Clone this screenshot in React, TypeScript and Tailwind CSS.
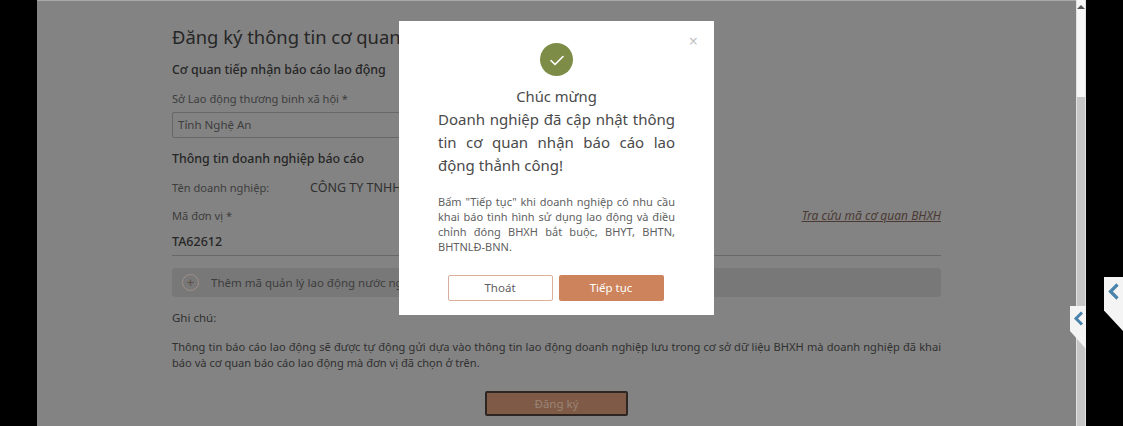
export default function App() {
  return (
    <div className="relative flex h-[426px] w-[1123px] overflow-hidden bg-black font-['Noto_Sans',sans-serif] text-[#303030]">
      <div className="w-[37px] shrink-0 bg-black" />
      <main className="h-full w-[1039px] shrink-0 overflow-hidden border-t border-[#a8a8a8] bg-[#838383] pl-[135px] pr-[135px]">
        <h1 className="mt-[22px] h-[28px] whitespace-nowrap text-[18.4px] leading-[28px] text-[#262626]">Đăng ký thông tin cơ quan nhận báo cáo lao động</h1>
        <h2 className="mt-[9px] h-[20px] text-[12.4px] font-medium leading-[20px] text-[#262626]">Cơ quan tiếp nhận báo cáo lao động</h2>
        <label className="mt-[9px] block h-[20px] text-[11.1px] leading-[20px] text-[#3d3d3d]">Sở Lao động thương binh xã hội *</label>
        <div className="mt-[3px] flex h-[26px] w-[300px] items-center rounded-[2px] border border-[#686868] pl-[5px] text-[11.5px] text-[#3d3d3d]">Tỉnh Nghệ An</div>
        <h2 className="mt-[11px] h-[20px] text-[12.4px] font-medium leading-[20px] text-[#262626]">Thông tin doanh nghiệp báo cáo</h2>
        <div className="mt-[9px] flex h-[20px] items-center text-[11.1px] text-[#3d3d3d]">
          <span className="w-[138px]">Tên doanh nghiệp:</span>
          <span className="text-[12.5px] text-[#303030]">CÔNG TY TNHH</span>
        </div>
        <div className="mt-[8px] flex h-[20px] items-center justify-between text-[11.1px] text-[#3d3d3d]">
          <span>Mã đơn vị *</span>
          <a className="text-[12px] italic text-[#4b3a33] underline">Tra cứu mã cơ quan BHXH</a>
        </div>
        <div className="mt-[6px] flex h-[24px] items-center border-b border-[#686868] pb-[2px] text-[12.5px] font-medium text-[#262626]">TA62612</div>
        <div className="mt-[12px] flex h-[29px] items-center rounded-[4px] bg-[#787878] pl-[10px] text-[11.5px] text-[#3d3d3d]">
          <span className="flex h-[17px] w-[17px] items-center justify-center rounded-full border border-[#a08f88] text-[13px] leading-none text-[#5f4e47]">+</span>
          <span className="ml-[12px]">Thêm mã quản lý lao động nước ngoài</span>
        </div>
        <p className="mt-[12px] h-[18px] text-[11.5px] leading-[18px] text-[#303030]">Ghi chú:</p>
        <p className="mt-[12px] text-justify text-[11.1px] leading-[16px] text-[#303030]">Thông tin báo cáo lao động sẽ được tự động gửi dựa vào thông tin lao động doanh nghiệp lưu trong cơ sở dữ liệu BHXH mà doanh nghiệp đã khai báo và cơ quan báo cáo lao động mà đơn vị đã chọn ở trên.</p>
        <div className="mt-[20px] flex justify-center">
          <button className="flex h-[25px] w-[143px] items-center justify-center rounded-[2px] border-2 border-[#2e2622] bg-[#7f5b47] text-[11.5px] text-[#9b8375]">Đăng ký</button>
        </div>
      </main>
      <div className="flex h-full w-[10px] shrink-0 flex-col border-x border-[#e2e2e2] bg-[#f6f6f6]">
        <div className="flex h-[97px] justify-center pt-[5px]">
          <span className="h-0 w-0 border-x-[4px] border-b-[4px] border-x-transparent border-b-[#555]" />
        </div>
        <div className="flex-1 bg-[#c6c6c6]" />
      </div>
      <div className="absolute left-[399px] top-[21px] flex h-[294px] w-[315px] flex-col bg-white px-[39px] pt-[22px]">
        <span className="absolute right-[16px] top-[12px] text-[16px] leading-none text-[#c4c4c4]">×</span>
        <div className="mx-auto flex h-[33px] w-[33px] items-center justify-center rounded-full bg-[#7d8c47]">
          <svg width="18" height="18" viewBox="0 0 18 18" fill="none" stroke="#fff" strokeWidth="1.6" strokeLinecap="round" strokeLinejoin="round"><path d="M3 9.5l4 4 8-8" /></svg>
        </div>
        <p className="mt-[8px] h-[24px] text-center text-[14.8px] leading-[24px] text-[#4a4a4a]">Chúc mừng</p>
        <p className="text-justify text-[15px] leading-[23px] text-[#4a4a4a]">Doanh nghiệp đã cập nhật thông tin cơ quan nhận báo cáo lao động thẳnh công!</p>
        <p className="mt-[17px] text-justify text-[11px] leading-[15px] text-[#5f5f5f]">Bấm "Tiếp tục" khi doanh nghiệp có nhu cầu khai báo tình hình sử dụng lao động và điều chỉnh đóng BHXH bắt buộc, BHYT, BHTN, BHTNLĐ-BNN.</p>
        <div className="mt-[21px] flex justify-center gap-[6px] pr-[2px]">
          <button className="flex h-[26px] w-[105px] items-center justify-center rounded-[2px] border border-[#d8b09c] bg-white text-[11.5px] text-[#5f5f5f]">Thoát</button>
          <button className="flex h-[26px] w-[105px] items-center justify-center rounded-[2px] bg-[#cd835c] text-[11.5px] text-white">Tiếp tục</button>
        </div>
      </div>
      <div className="absolute left-[1070px] top-[306px] flex h-[43px] w-[16px] justify-center bg-[#f4f4f4] pt-[5px] [clip-path:polygon(0_0,100%_0,100%_100%,0_58%)]">
        <svg width="11" height="15" viewBox="0 0 11 15" fill="none" stroke="#4a83ab" strokeWidth="3"><path d="M9 1.5L3 7.5l6 6" /></svg>
      </div>
      <div className="absolute left-[1104px] top-[277px] flex h-[54px] w-[19px] justify-center bg-[#f4f4f4] pt-[6px] [clip-path:polygon(0_0,100%_0,100%_100%,0_62%)]">
        <svg width="13" height="17" viewBox="0 0 13 17" fill="none" stroke="#4a83ab" strokeWidth="3.2"><path d="M10.5 1.5L3.5 8.5l7 7" /></svg>
      </div>
    </div>
  );
}
